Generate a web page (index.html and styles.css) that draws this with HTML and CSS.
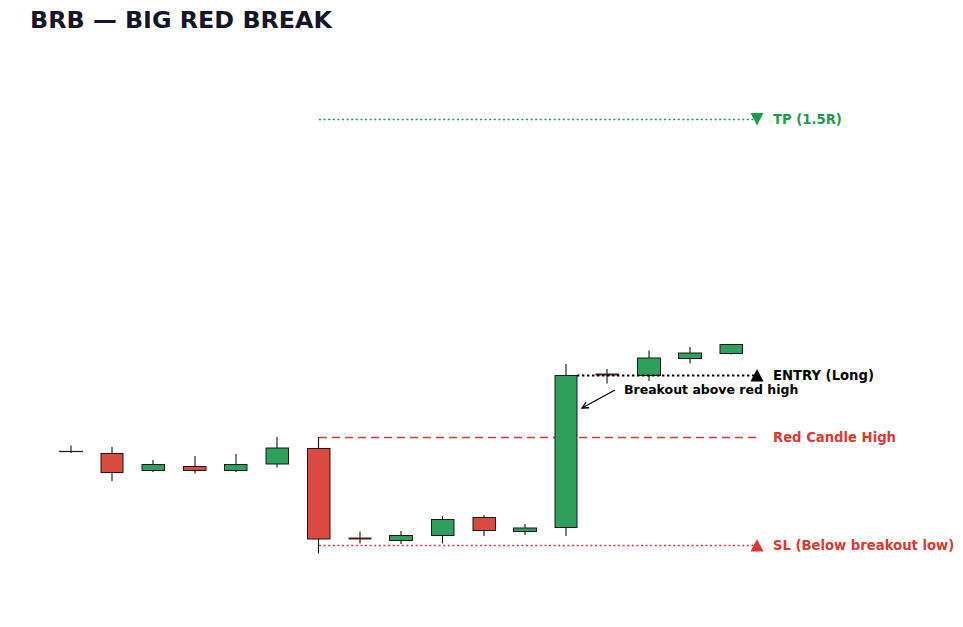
FILE: index.html
```html
<!DOCTYPE html>
<html lang="en">
<head>
<meta charset="utf-8">
<title>BRB — Big Red Break</title>
<link rel="stylesheet" href="styles.css">
</head>
<body>
<div class="page">
  <header class="header">
    <h1 class="title">BRB — BIG RED BREAK</h1>
  </header>
  <svg class="chart" viewBox="0 40 963 587" width="963" height="587" xmlns="http://www.w3.org/2000/svg">
    <defs>
      <marker id="ah" viewBox="0 0 10 10" refX="9" refY="5" markerWidth="8" markerHeight="8" orient="auto-start-reverse" markerUnits="userSpaceOnUse">
        <path d="M1 1 L9 5 L1 9" fill="none" stroke="#000" stroke-width="1.6"/>
      </marker>
    </defs>

    <!-- reference lines -->
    <line class="ln-tp" x1="319" y1="119.5" x2="757" y2="119.5"/>
    <line class="ln-high" x1="319" y1="437.5" x2="757" y2="437.5"/>
    <line class="ln-sl" x1="319" y1="545.5" x2="757" y2="545.5"/>

    <!-- candles -->
    <g class="candles">
      <line class="wick" x1="71" y1="445.5" x2="71" y2="453"/>
      <line class="doji" x1="59" y1="451.5" x2="83" y2="451.5"/>
      <line class="wick" x1="112" y1="447" x2="112" y2="481"/>
      <rect class="bear" x="101" y="453.5" width="22" height="19"/>
      <line class="wick" x1="153" y1="460" x2="153" y2="472"/>
      <rect class="bull" x="142" y="464.5" width="22.5" height="6"/>
      <line class="wick" x1="195" y1="456" x2="195" y2="473.5"/>
      <rect class="bear" x="183.5" y="466.5" width="22.5" height="4"/>
      <line class="wick" x1="236" y1="454" x2="236" y2="472"/>
      <rect class="bull" x="224.5" y="464.5" width="22.5" height="6"/>
      <line class="wick" x1="277" y1="437" x2="277" y2="467.5"/>
      <rect class="bull" x="266" y="448" width="22.5" height="16"/>
      <line class="wick" x1="318.5" y1="437" x2="318.5" y2="553.5"/>
      <rect class="bear" x="307.5" y="448.5" width="22.5" height="90.5"/>
      <line class="wick" x1="360" y1="531.5" x2="360" y2="543.5"/>
      <line class="doji-r" x1="348.5" y1="538.5" x2="371.5" y2="538.5"/>
      <line class="wick" x1="401" y1="531" x2="401" y2="544"/>
      <rect class="bull" x="389.5" y="535.5" width="23" height="5"/>
      <line class="wick" x1="442.5" y1="516" x2="442.5" y2="543.5"/>
      <rect class="bull" x="431.5" y="519.5" width="22.5" height="16"/>
      <line class="wick" x1="484" y1="515" x2="484" y2="536"/>
      <rect class="bear" x="473" y="517.5" width="22.5" height="13"/>
      <line class="wick" x1="525" y1="524" x2="525" y2="535"/>
      <rect class="bull" x="513.5" y="528" width="23" height="3.5"/>
      <line class="wick" x1="566" y1="364" x2="566" y2="536"/>
      <rect class="bull" x="555" y="375.5" width="22" height="152"/>
      <line class="wick" x1="607" y1="369" x2="607" y2="383.5"/>
      <line class="doji-r" x1="595.5" y1="374.5" x2="619" y2="374.5"/>
      <line class="wick" x1="649" y1="350.5" x2="649" y2="381"/>
      <rect class="bull" x="637.5" y="358" width="23" height="17.5"/>
      <line class="wick" x1="690" y1="347" x2="690" y2="363.5"/>
      <rect class="bull" x="678.5" y="353" width="23" height="5.5"/>
      <line class="wick" x1="731" y1="344" x2="731" y2="354.5"/>
      <rect class="bull" x="720" y="344.5" width="22.5" height="9"/>
    </g>

    <line class="ln-entry" x1="577" y1="375.5" x2="757" y2="375.5"/>

    <!-- markers -->
    <polygon class="mk-tp" points="750.5,113 763.5,113 757,125.5"/>
    <polygon class="mk-entry" points="750.5,381.5 763.5,381.5 757,369"/>
    <polygon class="mk-sl" points="750.5,551.5 763.5,551.5 757,539"/>

    <!-- labels -->
    <text class="lbl lbl-tp" x="773" y="124">TP (1.5R)</text>
    <text class="lbl lbl-entry" x="773" y="380">ENTRY (Long)</text>
    <text class="lbl lbl-red" x="773" y="442">Red Candle High</text>
    <text class="lbl lbl-red" x="773" y="550">SL (Below breakout low)</text>

    <!-- annotation -->
    <text class="note" x="624" y="393.5">Breakout above red high</text>
    <line class="arrow" x1="615" y1="390" x2="582" y2="408" marker-end="url(#ah)"/>
  </svg>
</div>
</body>
</html>
```
FILE: styles.css
```css
* { box-sizing: border-box; }

html, body {
  margin: 0;
  padding: 0;
  background: #ffffff;
}

.page {
  width: 963px;
  height: 627px;
  overflow: hidden;
  background: #ffffff;
  font-family: "DejaVu Sans", "Liberation Sans", sans-serif;
}

.header {
  height: 40px;
  padding: 5px 0 0 30px;
}

.title {
  margin: 0;
  font-size: 23.8px;
  line-height: 30px;
  font-weight: bold;
  color: #14142b;
  letter-spacing: 0;
}

.chart {
  display: block;
}

.wick {
  stroke: #111;
  stroke-width: 1.1;
}

.bull {
  fill: #2ea05b;
  stroke: #1a1a1a;
  stroke-width: 1;
}

.bear {
  fill: #db4a3f;
  stroke: #1a1a1a;
  stroke-width: 1;
}

.doji {
  stroke: #222;
  stroke-width: 1.3;
}

.doji-r {
  stroke: #4a1c1a;
  stroke-width: 2;
}

.ln-tp {
  stroke: #1f9a4c;
  stroke-width: 1.6;
  stroke-dasharray: 2 2.6;
}

.ln-high {
  stroke: #d93a32;
  stroke-width: 1.4;
  stroke-dasharray: 8 5;
}

.ln-sl {
  stroke: #d93a32;
  stroke-width: 1.6;
  stroke-dasharray: 2 2.6;
}

.ln-entry {
  stroke: #000;
  stroke-width: 1.8;
  stroke-dasharray: 2.4 2.6;
}

.mk-tp { fill: #1f9a4c; }
.mk-entry { fill: #000; }
.mk-sl { fill: #d93a32; }

.lbl {
  font-family: "DejaVu Sans", sans-serif;
  font-weight: bold;
  font-size: 13.2px;
}

.lbl-tp { fill: #1f9a4c; }
.lbl-entry { fill: #000; }
.lbl-red { fill: #d93a32; }

.note {
  font-family: "DejaVu Sans", sans-serif;
  font-weight: bold;
  font-size: 12.5px;
  fill: #000;
}

.arrow {
  stroke: #000;
  stroke-width: 1.3;
}
```
